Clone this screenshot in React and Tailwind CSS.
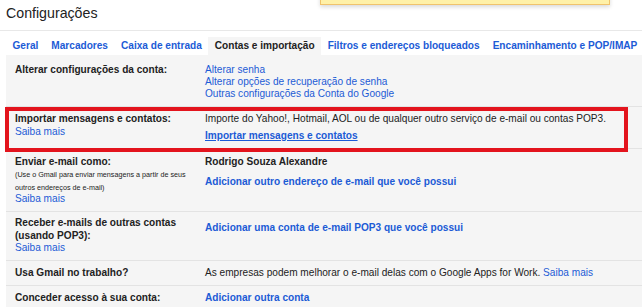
const LINK = 'text-[#1c5bd6]'

function Row({ children, className = '' }) {
  return <div className={`flex border-b border-[#e3e3e3] ${className}`}>{children}</div>
}

function Label({ children, className = '' }) {
  return <div className={`w-[199px] shrink-0 pl-[9px] ${className}`}>{children}</div>
}

const ABAS = ['Geral', 'Marcadores', 'Caixa de entrada', 'Contas e importação', 'Filtros e endereços bloqueados', 'Encaminhamento e POP/IMAP']

export default function App() {
  return (
    <div className="relative h-[307px] w-[642px] overflow-hidden bg-white font-['Liberation_Sans',Arial,sans-serif] text-[#222]">
      {/* faixa amarela de aviso, cortada no topo */}
      <div className="absolute left-[320px] top-[-12px] h-[17px] w-[290px] border border-[#f0c36d] bg-[#fff1a8] shadow-[0_2px_4px_rgba(0,0,0,0.15)]" />

      <div className="h-[30px] pl-[6px] pt-[5px] text-[14.2px] leading-[16px]">Configurações</div>
      <div className="border-t border-[#e8e8e8]" />

      <div className="flex whitespace-nowrap pl-[6px] pt-[6px] text-[10.1px] font-bold">
        {ABAS.map((a) => (
          <div
            key={a}
            className={`h-[18px] shrink-0 px-[6.5px] leading-[18px] ${
              a === 'Contas e importação' ? 'bg-[#f5f5f5] text-[#222]' : LINK
            }`}
          >
            {a}
          </div>
        ))}
      </div>

      <div className="ml-[6px] whitespace-nowrap bg-[#f5f5f5] pt-[3px] text-[10.1px] leading-[12px]">
        <Row className="pb-[6px] pt-[6px]">
          <Label className="font-bold">Alterar configurações da conta:</Label>
          <div className={`flex flex-col ${LINK}`}>
            <span>Alterar senha</span>
            <span>Alterar opções de recuperação de senha</span>
            <span>Outras configurações da Conta do Google</span>
          </div>
        </Row>

        <Row className="relative pb-[6px] pt-[6px]">
          <Label>
            <div className="font-bold">Importar mensagens e contatos:</div>
            <div className={`leading-[13px] ${LINK}`}>Saiba mais</div>
          </Label>
          <div>
            <div>Importe do Yahoo!, Hotmail, AOL ou de qualquer outro serviço de e-mail ou contas POP3.</div>
            <div className={`mt-[5px] font-bold underline ${LINK}`}>Importar mensagens e contatos</div>
          </div>
          <div className="pointer-events-none absolute left-[-1px] top-0 h-[45px] w-[623px] border-[4px] border-[#e3141d]" />
        </Row>

        <Row className="pb-[7px] pt-[7px]">
          <Label>
            <div className="font-bold">Enviar e-mail como:</div>
            <div className="text-[7.2px] leading-[13px]">(Use o Gmail para enviar mensagens a partir de seus</div>
            <div className="text-[7.2px] leading-[13px]">outros endereços de e-mail)</div>
            <div className={`leading-[10px] ${LINK}`}>Saiba mais</div>
          </Label>
          <div>
            <div className="font-bold">Rodrigo Souza Alexandre</div>
            <div className={`mt-[8px] font-bold ${LINK}`}>Adicionar outro endereço de e-mail que você possui</div>
          </div>
        </Row>

        <Row className="pb-[6px] pt-[5px]">
          <Label>
            <div className="font-bold leading-[12.5px]">Receber e-mails de outras contas</div>
            <div className="font-bold leading-[12.5px]">(usando POP3):</div>
            <div className={LINK}>Saiba mais</div>
          </Label>
          <div className={`mt-[5px] font-bold ${LINK}`}>Adicionar uma conta de e-mail POP3 que você possui</div>
        </Row>

        <Row className="pb-[6px] pt-[6px]">
          <Label className="font-bold">Usa Gmail no trabalho?</Label>
          <div>
            As empresas podem melhorar o e-mail delas com o Google Apps for Work.{' '}
            <span className={LINK}>Saiba mais</span>
          </div>
        </Row>

        <div className="flex pb-[6px] pt-[6px]">
          <Label className="font-bold">Conceder acesso à sua conta:</Label>
          <div className={`font-bold ${LINK}`}>Adicionar outra conta</div>
        </div>
      </div>
    </div>
  )
}
